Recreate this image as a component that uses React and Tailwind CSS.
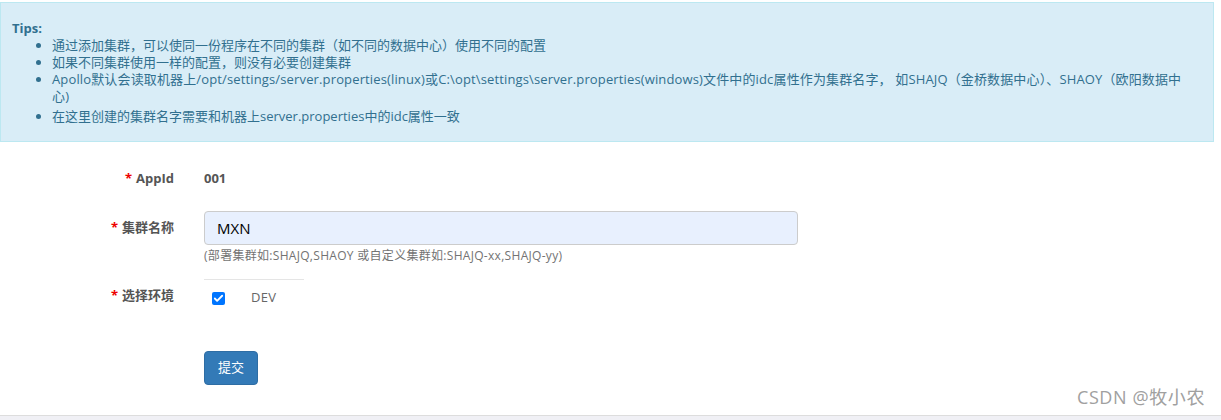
import { Check } from 'lucide-react';

const tips = [
  '通过添加集群，可以使同一份程序在不同的集群（如不同的数据中心）使用不同的配置',
  '如果不同集群使用一样的配置，则没有必要创建集群',
  'Apollo默认会读取机器上/opt/settings/server.properties(linux)或C:\\opt\\settings\\server.properties(windows)文件中的idc属性作为集群名字， 如SHAJQ（金桥数据中心）、SHAOY（欧阳数据中心)',
  '在这里创建的集群名字需要和机器上server.properties中的idc属性一致',
];

function Label({ children }) {
  return (
    <div className="w-[174px] shrink-0 text-right font-bold text-[13px] text-[#555]">
      <span className="text-[#e00] mr-1">*</span>
      {children}
    </div>
  );
}

export default function App() {
  return (
    <div className="w-[1221px] h-[420px] bg-white overflow-hidden flex flex-col font-['Open_Sans','Noto_Sans_CJK_SC',sans-serif]">
      <div className="mt-[2px] w-[1214px] h-[140px] shrink-0 border border-[#bce8f1] bg-[#d9edf7] text-[#31708f] text-[13px] pl-[11px] pr-[24px] pt-[17px]">
        <div className="font-bold leading-[17px]">Tips:</div>
        <ul className="list-disc pl-[40px] leading-[17px]">
          {tips.map((t, i) => (
            <li key={i} className={i === 2 ? 'tracking-[0.14px] mb-[3px]' : ''}>{t}</li>
          ))}
        </ul>
      </div>

      <div className="flex-1 flex flex-col pt-[28px]">
        <div className="flex items-center gap-[30px] h-[18px]">
          <Label>AppId</Label>
          <div className="font-bold text-[13px] text-[#555]">001</div>
        </div>

        <div className="flex gap-[30px] mt-[23px]">
          <div className="pt-[7px]">
            <Label>集群名称</Label>
          </div>
          <div className="flex flex-col">
            <div className="w-[594px] h-[34px] rounded-[4px] border border-[#ccc] bg-[#e8f0fe] flex items-center px-[12px] text-[15px] text-black">
              MXN
            </div>
            <div className="text-[12px] tracking-[0.3px] text-[#737373] mt-[2px] leading-[17px]">
              (部署集群如:SHAJQ,SHAOY 或自定义集群如:SHAJQ-xx,SHAJQ-yy)
            </div>
            <div className="w-[100px] h-px bg-[#e5e5e5] mt-[15px]" />
          </div>
        </div>

        <div className="flex gap-[30px] mt-[6px]">
          <Label>选择环境</Label>
          <div className="flex items-center pl-[8px] pt-[4px] gap-[26px] h-[20px]">
            <span className="w-[13px] h-[13px] rounded-[2px] bg-[#0075ff] flex items-center justify-center">
              <Check size={11} strokeWidth={4} className="text-white" />
            </span>
            <span className="text-[13px] tracking-[0.3px] text-[#666]">DEV</span>
          </div>
        </div>

        <div className="pl-[204px] mt-[45px]">
          <button className="w-[54px] h-[34px] rounded-[4px] border border-[#2e6da4] bg-[#337ab7] text-white text-[13px]">
            提交
          </button>
        </div>

        <div className="flex-1" />
        <div className="relative">
          <div className="absolute right-[16px] bottom-[4px] text-[18px] tracking-[0.6px] text-[#a0a0a0]">CSDN @牧小农</div>
        </div>
        <div className="h-[5px] border-t border-[#ddd] bg-[#f0f0f5]" />
      </div>
    </div>
  );
}
